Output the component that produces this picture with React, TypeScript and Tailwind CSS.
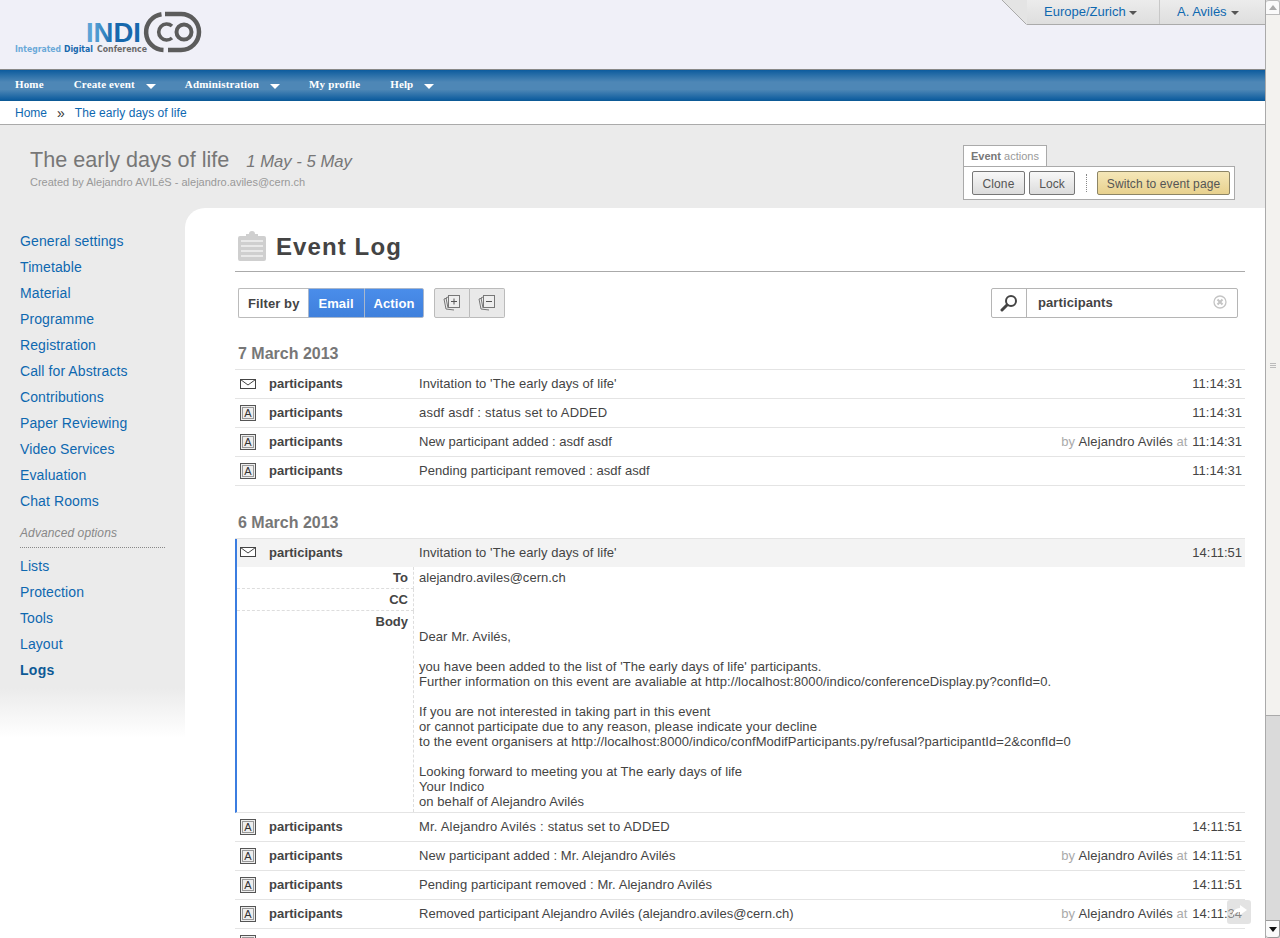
import type { ReactNode } from "react";

const sideLinks = [
  "General settings",
  "Timetable",
  "Material",
  "Programme",
  "Registration",
  "Call for Abstracts",
  "Contributions",
  "Paper Reviewing",
  "Video Services",
  "Evaluation",
  "Chat Rooms",
];
const advLinks = ["Lists", "Protection", "Tools", "Layout"];

function Logo() {
  return (
    <svg width="210" height="60" viewBox="0 0 210 60" className="block">
      <defs>
        <linearGradient id="logoN" x1="0" x2="1" y1="0" y2="0">
          <stop offset="0" stopColor="#5aa3d6" />
          <stop offset="1" stopColor="#1668ad" />
        </linearGradient>
      </defs>
      <text x="86" y="42" fontFamily="Liberation Sans" fontWeight="700" fontSize="27.5" fill="#5aa3d6">I</text>
      <text x="93.6" y="42" fontFamily="Liberation Sans" fontWeight="700" fontSize="27.5" fill="url(#logoN)">N</text>
      <text x="113.5" y="42" fontFamily="Liberation Sans" fontWeight="700" fontSize="27.5" fill="#1668ad">DI</text>
      <text x="15" y="52" fontFamily="DejaVu Sans" fontWeight="700" fontSize="8.5" textLength="46" lengthAdjust="spacingAndGlyphs" fill="#6aa9d8">Integrated</text>
      <text x="64" y="52" fontFamily="DejaVu Sans" fontWeight="700" fontSize="8.5" textLength="29" lengthAdjust="spacingAndGlyphs" fill="#1668ad">Digital</text>
      <text x="97" y="52" fontFamily="DejaVu Sans" fontWeight="700" fontSize="8.5" textLength="50" lengthAdjust="spacingAndGlyphs" fill="#6a6a6a">Conference</text>
      <g fill="none" stroke="#5c5c5c">
        <path d="M161.5 14.2A18 18 0 0 0 163.5 50" strokeWidth="4.5" />
        <path d="M165 14H181A18 18 0 0 1 181 50H168" strokeWidth="4.5" />
        <path d="M172 26A8 8 0 1 0 172 38" strokeWidth="3.6" />
        <circle cx="184" cy="32" r="7.5" strokeWidth="4" />
      </g>
    </svg>
  );
}

function NavItem({ label, caret }: { label: string; caret?: boolean }) {
  return (
    <div className="flex items-center pr-[30px]">
      <span className="text-[11px] font-bold tracking-[0.15px] text-white">{label}</span>
      {caret && <span className="ml-[11px] mt-[3px] mr-[-1px] h-0 w-0 border-x-[5px] border-t-[5px] border-x-transparent border-t-white" />}
    </div>
  );
}

function Btn({ children, cls }: { children: ReactNode; cls: string }) {
  return <button className={`h-[24px] rounded-[2px] border pt-[2px] text-[12px] tracking-[0.1px] text-[#555] ${cls}`}>{children}</button>;
}

function MailIcon() {
  return (
    <svg width="16" height="10" viewBox="0 0 16 10" fill="none" stroke="#444">
      <rect x="0.5" y="0.5" width="15" height="9" fill="#fff" />
      <path d="M0.5 0.5L8 6L15.5 0.5" />
    </svg>
  );
}

function ActionIcon() {
  return (
    <span className="flex h-[16px] w-[16px] items-center justify-center border border-[#555] bg-[#eee] outline outline-1 outline-offset-[-3px] outline-[#999]">
      <span className="text-[11px] leading-none text-[#333]">A</span>
    </span>
  );
}

function Row({ kind, msg, time, by, track = "tracking-[0.07px]" }: { kind: "mail" | "action"; msg: string; time: string; by?: boolean; track?: string }) {
  return (
    <div className="flex h-[29px] shrink-0 items-center border-b border-[#e4e4e4] text-[13px] text-[#444]">
      <div className="w-[34px] pl-[5px]">{kind === "mail" ? <MailIcon /> : <ActionIcon />}</div>
      <div className="w-[150px] font-bold">{msg ? "participants" : ""}</div>
      <div className={`flex-1 ${track}`}>{msg}</div>
      {by && (
        <div className="mr-[5px]">
          <span className="text-[#aaa]">by</span> <span className="tracking-[0.13px]">Alejandro Avilés</span> <span className="text-[#aaa]">at</span>
        </div>
      )}
      <div className="pr-[3px]">{time}</div>
    </div>
  );
}

function DateHead({ text, h }: { text: string; h: string }) {
  return (
    <div className={`flex items-end border-b border-[#e4e4e4] pb-[6px] pl-[3px] text-[16px] font-bold leading-[18px] text-[#777] ${h}`}>
      {text}
    </div>
  );
}

function StackIcon({ minus }: { minus?: boolean }) {
  return (
    <svg width="18" height="16" viewBox="0 0 18 16" fill="none" stroke="#777">
      <path d="M4 3L1 4L3 14L11 15" />
      <path d="M5 2L3 3L5 13" />
      <rect x="5.5" y="0.5" width="11" height="12" fill="#eee" />
      <path d={minus ? "M8 6.5H14" : "M8 6.5H14M11 3.5V9.5"} stroke="#555" />
    </svg>
  );
}

const bodyText = `Dear Mr. Avilés,

you have been added to the list of 'The early days of life' participants.
Further information on this event are avaliable at http://localhost:8000/indico/conferenceDisplay.py?confId=0.

If you are not interested in taking part in this event
or cannot participate due to any reason, please indicate your decline
to the event organisers at http://localhost:8000/indico/confModifParticipants.py/refusal?participantId=2&confId=0

Looking forward to meeting you at The early days of life
Your Indico
on behalf of Alejandro Avilés`;

export default function App() {
  return (
    <div className="relative flex h-[938px] w-[1280px] overflow-hidden bg-white font-['Liberation_Sans',Arial,sans-serif]">
      <div className="flex h-[938px] w-[1265px] flex-col overflow-hidden">
        {/* header */}
        <div className="flex h-[69px] shrink-0 justify-between bg-[#f0f0f8]">
          <Logo />
          <div className="flex h-[25px] items-start text-[13px] text-[#0e68b0]">
            <svg width="25" height="25" viewBox="0 0 25 25" className="block">
              <path d="M0 0L25 25V0Z" fill="#e4e4e4" />
              <path d="M0 0L24.5 24.5" stroke="#aaa" fill="none" />
            </svg>
            <div className="flex h-[25px] border-b border-[#aaa] bg-gradient-to-b from-[#ececec] to-[#dedede]">
              <div className="flex w-[133px] items-center border-r border-[#c8c8c8] pb-[1px] pl-[17px]">
                Europe/Zurich
                <span className="ml-[3px] mt-[2px] h-0 w-0 border-x-[4px] border-t-[4px] border-x-transparent border-t-[#555]" />
              </div>
              <div className="flex w-[105px] items-center pb-[1px] pl-[17px]">
                A. Avilés
                <span className="ml-[4px] mt-[2px] h-0 w-0 border-x-[4px] border-t-[4px] border-x-transparent border-t-[#555]" />
              </div>
            </div>
          </div>
        </div>
        {/* nav */}
        <div className="flex h-[32px] shrink-0 items-center border-y border-t-[#888] border-b-[#0d5a96] bg-[linear-gradient(#0d5c9e,#4e87b6_40%,#4e87b6_65%,#0d5c9e)] pb-[1px] pl-[15px] font-['Liberation_Serif',serif]">
          <NavItem label="Home" />
          <NavItem label="Create event" caret />
          <NavItem label="Administration" caret />
          <NavItem label="My profile" />
          <NavItem label="Help" caret />
        </div>
        {/* breadcrumb */}
        <div className="flex h-[24px] shrink-0 items-center border-b border-[#aaa] pl-[15px] text-[12px] text-[#0e68b0]">
          <span>Home</span>
          <span className="mx-[10px] text-[14px] leading-none text-[#333]">»</span>
          <span className="tracking-[0.05px]">The early days of life</span>
        </div>
        {/* event title */}
        <div className="flex h-[83px] shrink-0 justify-between bg-[#ebebeb] pl-[30px] pr-[30px]">
          <div className="pt-[22px]">
            <div className="text-[21.6px] leading-[26px] text-[#777]">
              The early days of life
              <span className="ml-[17px] text-[16.7px] italic">1 May - 5 May</span>
            </div>
            <div className="text-[11px] leading-[14px] text-[#999]">
              Created by <span>Alejandro AVILéS</span> - <span>alejandro.aviles@cern.ch</span>
            </div>
          </div>
          <div className="pt-[20px]">
            <div className="mb-[-1px] flex h-[22px] w-[84px] items-center border border-b-0 border-[#aaa] bg-white pl-[7px] text-[11px] text-[#999]">
              <b className="text-[#777]">Event</b>&nbsp;actions
            </div>
            <div className="flex h-[34px] w-[272px] items-center border border-[#aaa] bg-white pl-[8px]">
              <Btn cls="w-[53px] border-[#777] bg-gradient-to-b from-[#f8f8f8] to-[#dcdcdc]">Clone</Btn>
              <span className="ml-[4px]" />
              <Btn cls="w-[46px] border-[#777] bg-gradient-to-b from-[#f8f8f8] to-[#dcdcdc]">Lock</Btn>
              <span className="ml-[11px] mr-[10px] h-[18px] border-l border-dotted border-[#888]" />
              <Btn cls="w-[133px] border-[#8d8566] bg-gradient-to-b from-[#f5e7b8] to-[#e8d18e]">Switch to event page</Btn>
            </div>
          </div>
        </div>
        {/* body */}
        <div className="flex min-h-0 flex-1 bg-[#ebebeb]">
          <div className="w-[185px] bg-[linear-gradient(#ebebeb_0,#ebebeb_480px,#fff_530px)] pt-[20px] pl-[20px] text-[14px] tracking-[0.1px] text-[#0e68b0]">
            {sideLinks.map((l) => (
              <div key={l} className="flex h-[26px] items-center">
                {l}
              </div>
            ))}
            <div className="mt-[7px] h-[27px] w-[145px] border-b border-dotted border-[#888] pt-[4px] text-[12px] italic leading-[16px] tracking-[0.1px] text-[#888]">
              Advanced options
            </div>
            <div className="pt-[5px]">
              {advLinks.map((l) => (
                <div key={l} className="flex h-[26px] items-center">
                  {l}
                </div>
              ))}
              <div className="flex h-[26px] items-center font-bold tracking-[0.3px] text-[#0d5a96]">Logs</div>
            </div>
          </div>
          <div className="flex-1 rounded-tl-[20px] bg-white pl-[50px] pr-[20px]">
            <div className="flex h-[64px] items-end border-b border-[#aaa] pb-[7px] pl-[3px]">
              <svg width="28" height="30" viewBox="0 0 28 30" className="mb-[3px]">
                <path d="M0 7a2 2 0 0 1 2-2h6V3h3a3 3 0 0 1 6 0h3v2h6a2 2 0 0 1 2 2v21a2 2 0 0 1-2 2H2a2 2 0 0 1-2-2Z" fill="#cfcfcf" />
                <path d="M3 10H25M3 15H25M3 20H25M3 25H25" stroke="#f2f2f2" strokeWidth="1.5" />
              </svg>
              <div className="ml-[10px] text-[24px] font-bold leading-[34px] tracking-[1.1px] text-[#444]">Event Log</div>
            </div>
            {/* toolbar */}
            <div className="mt-[16px] flex h-[30px] justify-between pl-[3px] pr-[7px] text-[13px] font-bold tracking-[0.1px]">
              <div className="flex">
                <div className="flex w-[70px] items-center rounded-l-[2px] border border-r-0 border-[#bbb] pl-[9px] pt-[1px] text-[#444]">Filter by</div>
                <div className="flex w-[56px] items-center justify-center border border-r-0 border-[#a9b7cc] bg-gradient-to-b from-[#4a8dea] to-[#3f80dc] pr-[1px] pt-[1px] text-white">Email</div>
                <div className="flex w-[60px] items-center justify-center rounded-r-[2px] border border-[#a9b7cc] bg-gradient-to-b from-[#4a8dea] to-[#3f80dc] pt-[1px] text-white">Action</div>
                <div className="ml-[10px] flex w-[36px] items-center justify-center rounded-l-[2px] border border-[#bbb] bg-[#e9e9e9]"><StackIcon /></div>
                <div className="flex w-[35px] items-center justify-center rounded-r-[2px] border border-l-0 border-[#bbb] bg-[#e9e9e9]"><StackIcon minus /></div>
              </div>
              <div className="flex w-[247px] items-center rounded-[2px] border border-[#b5b5b5]">
                <div className="flex h-full w-[35px] items-center justify-center border-r border-[#b5b5b5]">
                  <svg width="18" height="18" viewBox="0 0 18 18" fill="none" stroke="#444">
                    <circle cx="11" cy="7" r="5" strokeWidth="2" />
                    <path d="M7 11L2 16" strokeWidth="3" strokeLinecap="round" />
                  </svg>
                </div>
                <div className="flex-1 pl-[11px] text-[#444]">participants</div>
                <svg width="14" height="14" viewBox="0 0 14 14" fill="none" className="mr-[10px] mb-[2px]">
                  <circle cx="7" cy="7" r="6" stroke="#c4c4c4" strokeWidth="1.3" />
                  <path d="M4.5 4.5L9.5 9.5M9.5 4.5L4.5 9.5" stroke="#c4c4c4" strokeWidth="2" />
                </svg>
              </div>
            </div>
            <DateHead text="7 March 2013" h="h-[52px]" />
            <Row kind="mail" msg="Invitation to 'The early days of life'" time="11:14:31" />
            <Row kind="action" msg="asdf asdf : status set to ADDED" time="11:14:31" track="tracking-[0.2px]" />
            <Row kind="action" msg="New participant added : asdf asdf" time="11:14:31" by track="tracking-normal" />
            <Row kind="action" msg="Pending participant removed : asdf asdf" time="11:14:31" track="tracking-[0.04px]" />
            <DateHead text="6 March 2013" h="h-[53px]" />
            {/* expanded */}
            <div className="border-b border-l-2 border-b-[#e4e4e4] border-l-[#3b7de0] text-[13px] leading-[15px] text-[#444]">
              <div className="flex h-[28px] items-center bg-[#f3f3f3] pb-[2px]">
                <div className="w-[32px] pl-[3px]"><MailIcon /></div>
                <div className="w-[150px] font-bold">participants</div>
                <div className="flex-1 tracking-[0.07px]">Invitation to 'The early days of life'</div>
                <div className="pr-[3px]">14:11:51</div>
              </div>
              <div className="flex h-[22px]">
                <div className="w-[177px] border-b border-r border-dashed border-[#ddd] pr-[5px] pt-[3px] text-right font-bold">To</div>
                <div className="pl-[5px] pt-[3px] tracking-[0.02px]">alejandro.aviles@cern.ch</div>
              </div>
              <div className="flex h-[22px]">
                <div className="w-[177px] border-b border-r border-dashed border-[#ddd] pr-[5px] pt-[3px] text-right font-bold">CC</div>
              </div>
              <div className="flex h-[201px]">
                <div className="w-[177px] border-r border-dashed border-[#ddd] pr-[5px] pt-[3px] text-right font-bold">Body</div>
                <div className="whitespace-pre-line pl-[5px] pt-[18px] tracking-[0.07px]">{bodyText}</div>
              </div>
            </div>
            <Row kind="action" msg="Mr. Alejandro Avilés : status set to ADDED" time="14:11:51" track="tracking-[0.2px]" />
            <Row kind="action" msg="New participant added : Mr. Alejandro Avilés" time="14:11:51" by />
            <Row kind="action" msg="Pending participant removed : Mr. Alejandro Avilés" time="14:11:51" />
            <Row kind="action" msg="Removed participant Alejandro Avilés (alejandro.aviles@cern.ch)" time="14:11:34" by track="tracking-[0.03px]" />
            <Row kind="action" msg="" time="" />
          </div>
        </div>
      </div>
      {/* scrollbar */}
      <div className="flex w-[15px] flex-col border-l border-[#aaa] bg-[#dadada]">
        <div className="flex h-[15px] items-center justify-center rounded-t-[3px] border border-l-0 border-[#bbb] bg-[#fafafa]">
          <span className="h-0 w-0 border-x-[4px] border-b-[5px] border-x-transparent border-b-[#aaa]" />
        </div>
        <div className="flex h-[701px] flex-col items-center justify-center gap-[1px] border-b border-[#aaa] bg-[#f3f2ef]">
          <span className="h-px w-[6px] bg-[#bbb]" />
          <span className="h-px w-[6px] bg-[#bbb]" />
          <span className="h-px w-[6px] bg-[#bbb]" />
        </div>
        <div className="flex-1" />
        <div className="flex h-[18px] items-center justify-center rounded-b-[3px] border border-l-0 border-[#999] bg-[#fafafa]">
          <span className="h-0 w-0 border-x-[4px] border-t-[5px] border-x-transparent border-t-[#111]" />
        </div>
      </div>
      {/* back to top */}
      <div className="absolute left-[1227px] top-[900px] flex h-[24px] w-[24px] items-center justify-center rounded-[3px] bg-[#c8c8c8]/50">
        <svg width="18" height="16" viewBox="0 0 18 16" fill="#fff">
          <path d="M10 1L17 6L10 11V8C6 8 4 9 2 13C2 8 5 4 10 4Z" />
        </svg>
      </div>
    </div>
  );
}
